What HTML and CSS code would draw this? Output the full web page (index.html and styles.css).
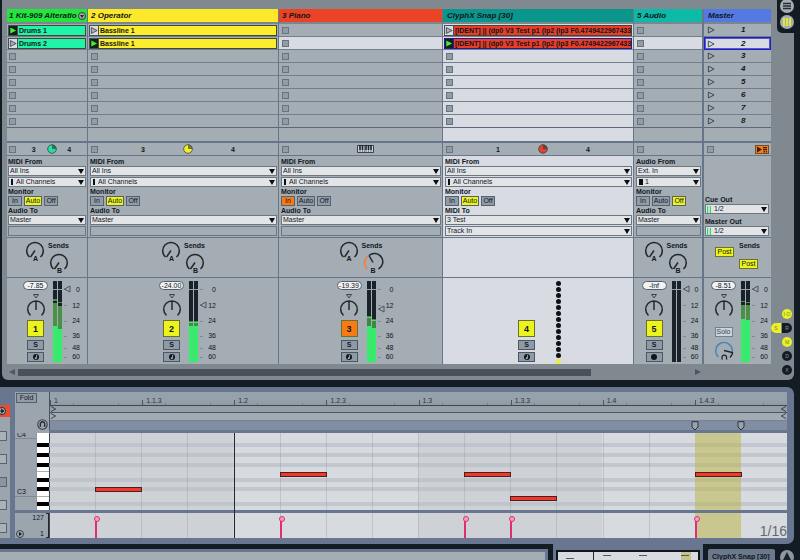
FILE: index.html
```
<!DOCTYPE html>
<html lang="en">
<head>
<meta charset="utf-8">
<title>Session</title>
<link rel="stylesheet" href="styles.css">
</head>
<body>
<svg class="defs" aria-hidden="true">
  <symbol id="play" viewBox="0 0 9 9"><path d="M1.5 1.2 8 4.5 1.5 7.8Z"/></symbol>
  <symbol id="arm" viewBox="0 0 8 8"><circle cx="4" cy="4" r="3" fill="#11161b"/><path d="M4.6 1.8v3.4" stroke="#aab2ba" stroke-width=".9"/><circle cx="3.7" cy="5.2" r="1" fill="#aab2ba"/></symbol>
  <symbol id="pan" viewBox="0 0 24 25"><path d="M9.5 1.500h5L12 5Z" fill="none" stroke="#3b444d"/><path d="M6.500 22.500A8.300 8.300 0 1 1 17.500 22.500M12 8v9" fill="none" stroke="#222a31" stroke-width="1.500"/></symbol>
  <symbol id="sends" viewBox="0 0 57 38">
    <g fill="none" stroke="#20272e" stroke-width="1.500"><path d="M6.500 19A8.300 8.300 0 1 1 17.500 19M12 12.500 7.500 19"/><path d="M30.500 31A8.300 8.300 0 1 1 41.500 31M36 24.500 31.500 31"/></g>
  </symbol>
  <symbol id="pie" viewBox="0 0 10 10"><circle cx="5" cy="5" r="4.300" stroke="#39424a" stroke-width=".8"/><path d="M5 5V.7A4.300 4.300 0 0 1 9.300 5Z" fill="#2c4038" opacity=".65"/></symbol>
</svg>

<main class="session">
  <div class="tracks">

    <section class="track kit">
      <h2>1 Kit-909 Alteratio <svg class="fold" viewBox="0 0 8 8"><circle cx="4" cy="4" r="3.500" fill="#a8a3b4" stroke="#32402f"/><path d="M2 3h4L4 6Z" fill="#20272e"/></svg></h2>
      <ul class="slots">
        <li class="clip"><button class="launch on" aria-label="Launch"><svg><use href="#play"/></svg></button><span>Drums 1</span></li>
        <li class="clip"><button class="launch" aria-label="Launch"><svg><use href="#play"/></svg></button><span>Drums 2</span></li>
        <li><button class="stop" aria-label="Stop"></button></li><li><button class="stop" aria-label="Stop"></button></li><li><button class="stop" aria-label="Stop"></button></li><li><button class="stop" aria-label="Stop"></button></li><li><button class="stop" aria-label="Stop"></button></li><li><button class="stop" aria-label="Stop"></button></li>
        <li></li>
      </ul>
      <div class="status"><button class="stop" aria-label="Stop"></button><span class="c1">3</span><svg class="c2 pie"><use href="#pie"/></svg><span class="c3">4</span></div>
      <div class="io">
        <label for="k1">MIDI From</label><div class="drop"><select id="k1"><option>All Ins</option></select></div>
        <div class="drop chan"><select aria-label="Channel"><option>All Channels</option></select></div>
        <div class="cap">Monitor</div><div class="monitor"><button>In</button><button class="lit">Auto</button><button>Off</button></div>
        <label for="k2">Audio To</label><div class="drop"><select id="k2"><option>Master</option></select></div>
        <div class="blank"></div>
      </div>
      <div class="sends"><div class="unit"><svg class="knobs"><use href="#sends"/></svg><b class="a">A</b><b class="b">B</b><b class="s">Sends</b></div></div>
      <div class="mixer"><div class="unit">
        <div class="strip"><output>-7.85</output><svg class="pan"><use href="#pan"/></svg><button class="num">1</button><button class="sm">S</button><button class="sm" aria-label="Arm"><svg><use href="#arm"/></svg></button></div>
        <svg class="meter" viewBox="0 0 9 81"><path d="M0 0h4v81H0zM5 0h4v81H5z" fill="#1a2229"/><path d="M0 18h4v2H0zM0 22h4v23H0zM5 21h4v1H5zM5 25h4v23H5z" fill="#4b9049"/><path d="M0 45h4v36H0zM5 48h4v33H5z" fill="#32ee68"/><path d="M4 45h1v36H4z" fill="#5ad37c"/><path d="M0 8h9v1H0z" fill="#9aa3aa"/></svg>
        <div class="scale"><span>0</span><span>12</span><span>24</span><span>36</span><span>48</span><span>60</span><input type="range" class="fader" aria-label="Volume" value="94"></div>
      </div></div>
    </section>

    <section class="track operator">
      <h2>2 Operator</h2>
      <ul class="slots">
        <li class="clip"><button class="launch" aria-label="Launch"><svg><use href="#play"/></svg></button><span>Bassline 1</span></li>
        <li class="clip"><button class="launch on" aria-label="Launch"><svg><use href="#play"/></svg></button><span>Bassline 1</span></li>
        <li><button class="stop" aria-label="Stop"></button></li><li><button class="stop" aria-label="Stop"></button></li><li><button class="stop" aria-label="Stop"></button></li><li><button class="stop" aria-label="Stop"></button></li><li><button class="stop" aria-label="Stop"></button></li><li><button class="stop" aria-label="Stop"></button></li>
        <li></li>
      </ul>
      <div class="status"><button class="stop" aria-label="Stop"></button><span class="c1">3</span><svg class="c2 pie"><use href="#pie"/></svg><span class="c3">4</span></div>
      <div class="io">
        <label for="o1">MIDI From</label><div class="drop"><select id="o1"><option>All Ins</option></select></div>
        <div class="drop chan"><select aria-label="Channel"><option>All Channels</option></select></div>
        <div class="cap">Monitor</div><div class="monitor"><button>In</button><button class="lit">Auto</button><button>Off</button></div>
        <label for="o2">Audio To</label><div class="drop"><select id="o2"><option>Master</option></select></div>
        <div class="blank"></div>
      </div>
      <div class="sends"><div class="unit"><svg class="knobs"><use href="#sends"/></svg><b class="a">A</b><b class="b">B</b><b class="s">Sends</b></div></div>
      <div class="mixer"><div class="unit">
        <div class="strip"><output>-24.00</output><svg class="pan"><use href="#pan"/></svg><button class="num">2</button><button class="sm">S</button><button class="sm" aria-label="Arm"><svg><use href="#arm"/></svg></button></div>
        <svg class="meter" viewBox="0 0 9 81"><path d="M0 0h4v81H0zM5 0h4v81H5z" fill="#1a2229"/><path d="M0 40h4v5H0zM5 40h4v5H5z" fill="#3f8f45"/><path d="M0 41h9v1H0z" fill="#65cf7c"/><path d="M0 45h4v36H0zM5 45h4v36H5z" fill="#32ee68"/><path d="M4 45h1v36H4z" fill="#5ad37c"/><path d="M0 8h9v1H0z" fill="#9aa3aa"/></svg>
        <div class="scale"><span>0</span><span>12</span><span>24</span><span>36</span><span>48</span><span>60</span><input type="range" class="fader" aria-label="Volume" value="73"></div>
      </div></div>
    </section>

    <section class="track piano">
      <h2>3 Piano</h2>
      <ul class="slots">
        <li><button class="stop" aria-label="Stop"></button></li><li class="light"><button class="stop" aria-label="Stop"></button></li>
        <li><button class="stop" aria-label="Stop"></button></li><li><button class="stop" aria-label="Stop"></button></li><li><button class="stop" aria-label="Stop"></button></li><li><button class="stop" aria-label="Stop"></button></li><li><button class="stop" aria-label="Stop"></button></li><li><button class="stop" aria-label="Stop"></button></li>
        <li></li>
      </ul>
      <div class="status"><button class="stop" aria-label="Stop"></button><svg class="c2 keys-icon" viewBox="0 0 17 8"><path d="M.5.5h16v7H.5Z" fill="#cdd2d6" stroke="#39424a"/><path d="M3 0v5M5.500 0v5M9 0v5M11.500 0v5M14 0v5" stroke="#1c2329" stroke-width="1.600"/><path d="M3 5v3M5.500 5v3M7.500 1v7M9 5v3M11.500 5v3M14 5v3" stroke="#4a535c" stroke-width=".6"/></svg></div>
      <div class="io">
        <label for="p1">MIDI From</label><div class="drop"><select id="p1"><option>All Ins</option></select></div>
        <div class="drop chan"><select aria-label="Channel"><option>All Channels</option></select></div>
        <div class="cap">Monitor</div><div class="monitor"><button class="hot">In</button><button>Auto</button><button>Off</button></div>
        <label for="p2">Audio To</label><div class="drop"><select id="p2"><option>Master</option></select></div>
        <div class="blank"></div>
      </div>
      <div class="sends"><div class="unit"><svg class="knobs" viewBox="0 0 57 38"><g fill="none" stroke="#20272e" stroke-width="1.500"><path d="M6.500 19A8.300 8.300 0 1 1 17.500 19M12 12.500 7.500 19"/><path d="M32 17.500A8.300 8.300 0 1 1 41.500 31M36 24.500 32 17.500"/><path d="M30.500 31A8.300 8.300 0 0 1 31 18" stroke="#ee8035"/></g></svg><b class="a">A</b><b class="b">B</b><b class="s">Sends</b></div></div>
      <div class="mixer"><div class="unit">
        <div class="strip"><output>-19.39</output><svg class="pan"><use href="#pan"/></svg><button class="num hot">3</button><button class="sm">S</button><button class="sm" aria-label="Arm"><svg><use href="#arm"/></svg></button></div>
        <svg class="meter" viewBox="0 0 9 81"><path d="M0 0h4v81H0zM5 0h4v81H5z" fill="#1a2229"/><path d="M0 35h4v10H0zM5 38h4v10H5z" fill="#3f8745"/><path d="M0 36h4v1H0zM5 39h4v1H5z" fill="#65cf7c"/><path d="M0 45h4v36H0zM5 47h4v34H5z" fill="#32ee68"/><path d="M4 45h1v36H4z" fill="#5ad37c"/><path d="M0 8h9v1H0z" fill="#9aa3aa"/></svg>
        <div class="scale"><span>0</span><span>12</span><span>24</span><span>36</span><span>48</span><span>60</span><input type="range" class="fader" aria-label="Volume" value="67"></div>
      </div></div>
    </section>

    <section class="track snap">
      <h2>ClyphX Snap [30]</h2>
      <ul class="slots">
        <li class="clip"><button class="launch" aria-label="Launch"><svg><use href="#play"/></svg></button><span>[IDENT] || (dp0 V3 Test p1 (lp2 (lp3 F0.4749422967433</span></li>
        <li class="clip picked"><button class="launch on" aria-label="Launch"><svg><use href="#play"/></svg></button><span>[IDENT] || (dp0 V3 Test p1 (lp2 (lp3 F0.4749422967433</span></li>
        <li><button class="stop" aria-label="Stop"></button></li><li><button class="stop" aria-label="Stop"></button></li><li><button class="stop" aria-label="Stop"></button></li><li><button class="stop" aria-label="Stop"></button></li><li><button class="stop" aria-label="Stop"></button></li><li><button class="stop" aria-label="Stop"></button></li>
        <li></li>
      </ul>
      <div class="status"><button class="stop" aria-label="Stop"></button><span class="c1">1</span><svg class="c2 pie"><use href="#pie"/></svg><span class="c3">4</span></div>
      <div class="io">
        <label for="s1">MIDI From</label><div class="drop"><select id="s1"><option>All Ins</option></select></div>
        <div class="drop chan"><select aria-label="Channel"><option>All Channels</option></select></div>
        <div class="cap">Monitor</div><div class="monitor"><button>In</button><button class="lit">Auto</button><button>Off</button></div>
        <label for="s2">MIDI To</label><div class="drop"><select id="s2"><option>3 Test</option></select></div>
        <div class="drop"><select aria-label="Destination"><option>Track In</option></select></div>
      </div>
      <div class="sends"></div>
      <div class="mixer"><div class="unit">
        <div class="strip low"><button class="num">4</button><button class="sm">S</button><button class="sm" aria-label="Arm"><svg><use href="#arm"/></svg></button></div>
        <div class="dots"><i></i><i></i><i></i><i></i><i></i><i></i><i></i><i></i><i></i><i></i><i></i><i></i><i></i><i></i></div>
      </div></div>
    </section>

    <section class="track audio">
      <h2>5 Audio</h2>
      <ul class="slots">
        <li><button class="stop" aria-label="Stop"></button></li><li class="light"><button class="stop" aria-label="Stop"></button></li>
        <li><button class="stop" aria-label="Stop"></button></li><li><button class="stop" aria-label="Stop"></button></li><li><button class="stop" aria-label="Stop"></button></li><li><button class="stop" aria-label="Stop"></button></li><li><button class="stop" aria-label="Stop"></button></li><li><button class="stop" aria-label="Stop"></button></li>
        <li></li>
      </ul>
      <div class="status"><button class="stop" aria-label="Stop"></button></div>
      <div class="io">
        <label for="a1">Audio From</label><div class="drop"><select id="a1"><option>Ext. In</option></select></div>
        <div class="drop chan wide"><select aria-label="Channel"><option>1</option></select></div>
        <div class="cap">Monitor</div><div class="monitor"><button>In</button><button>Auto</button><button class="lit">Off</button></div>
        <label for="a2">Audio To</label><div class="drop"><select id="a2"><option>Master</option></select></div>
        <div class="blank"></div>
      </div>
      <div class="sends"><div class="unit"><svg class="knobs"><use href="#sends"/></svg><b class="a">A</b><b class="b">B</b><b class="s">Sends</b></div></div>
      <div class="mixer"><div class="unit">
        <div class="strip"><output>-Inf</output><svg class="pan"><use href="#pan"/></svg><button class="num">5</button><button class="sm">S</button><button class="sm" aria-label="Arm"><svg viewBox="0 0 8 8"><circle cx="4" cy="4" r="3" fill="#11161b"/></svg></button></div>
        <svg class="meter" viewBox="0 0 9 81"><path d="M0 0h4v81H0zM5 0h4v81H5z" fill="#1a2229"/><path d="M0 8h9v1H0z" fill="#9aa3aa"/></svg>
        <div class="scale"><span>0</span><span>12</span><span>24</span><span>36</span><span>48</span><span>60</span><input type="range" class="fader" aria-label="Volume" value="94"></div>
      </div></div>
    </section>

    <section class="track master">
      <h2>Master</h2>
      <ul class="slots">
        <li><button class="scene"><svg><use href="#play"/></svg>1</button></li>
        <li class="light"><button class="scene"><svg><use href="#play"/></svg>2</button></li>
        <li><button class="scene"><svg><use href="#play"/></svg>3</button></li>
        <li><button class="scene"><svg><use href="#play"/></svg>4</button></li>
        <li><button class="scene"><svg><use href="#play"/></svg>5</button></li>
        <li><button class="scene"><svg><use href="#play"/></svg>6</button></li>
        <li><button class="scene"><svg><use href="#play"/></svg>7</button></li>
        <li><button class="scene"><svg><use href="#play"/></svg>8</button></li>
        <li></li>
      </ul>
      <div class="status"><button class="stop" aria-label="Stop all clips"></button><button class="back" aria-label="Back to arrangement"><svg viewBox="0 0 12 7"><path d="M1 .5 6 3.500 1 6.500ZM7 1h4v1.200H7zM7 3h4v1.200H7zM7.500 5H9v1.500H7.500zM10 5h1v1.500h-1z" fill="#3a1c08"/></svg></button></div>
      <div class="io">
        <label for="m1">Cue Out</label><div class="drop out"><select id="m1"><option>1/2</option></select></div>
        <label for="m2">Master Out</label><div class="drop out"><select id="m2"><option>1/2</option></select></div>
      </div>
      <div class="sends post"><div><button>Post</button></div><div><b>Sends</b><button>Post</button></div></div>
      <div class="mixer"><div class="unit">
        <div class="strip"><output>-8.51</output><svg class="pan"><use href="#pan"/></svg><button class="solo">Solo</button><svg class="cue" viewBox="0 0 24 24"><path d="M6.500 18A8.300 8.300 0 1 1 20.200 13" fill="none" stroke="#3f86bd" stroke-width="1.400"/><path d="M12 11.500 20.500 13.500Q20.500 16 18 18.500" fill="none" stroke="#20272e" stroke-width="1.500"/><path d="M10 20.500v-2a2.300 2.300 0 0 1 4.600 0v2M9.300 20h1.500M13.800 20h1.500" fill="none" stroke="#20272e" stroke-width="1.200"/></svg></div>
        <svg class="meter" viewBox="0 0 9 81"><path d="M0 0h4v81H0zM5 0h4v81H5z" fill="#1a2229"/><path d="M0 20h4v1H0zM5 21h4v1H5zM0 24h4v15H0zM5 24h4v16H5z" fill="#4b9049"/><path d="M0 38h4v43H0zM5 39h4v42H5z" fill="#32ee68"/><path d="M4 39h1v42H4z" fill="#5ad37c"/><path d="M0 8h9v1H0z" fill="#9aa3aa"/></svg>
        <div class="scale"><span>0</span><span>12</span><span>24</span><span>36</span><span>48</span><span>60</span><input type="range" class="fader" aria-label="Volume" value="94"></div>
      </div></div>
    </section>
  </div>

  <div class="scroller"><svg viewBox="0 0 6 6"><path d="M6 0v6L0 3Z"/></svg><div class="rail"><div class="thumb"></div></div><svg viewBox="0 0 6 6"><path d="M0 0v6l6-3Z"/></svg></div>

  <nav class="views">
    <button aria-label="Arrangement view"><svg viewBox="0 0 14 14"><circle cx="7" cy="7" r="7" fill="#a4acb4"/><path d="M3 4.500h8M3 7h8M3 9.500h8" stroke="#232b33" stroke-width="1.300"/></svg></button>
    <button aria-label="Session view"><svg viewBox="0 0 14 14"><circle cx="7" cy="7" r="7" fill="#a4acb4"/><path d="M4 3v8M7 3v8M10 3v8" stroke="#e9f02a" stroke-width="1.800"/></svg></button>
  </nav>
  <nav class="toggles">
    <button class="yes">I·O</button>
    <div><button class="yes left">S</button><button class="right">R</button></div>
    <button class="yes">M</button>
    <button>D</button>
    <button>X</button>
  </nav>
</main>

<section class="detail">
  <aside class="clipbox">
    <div class="bar"><svg viewBox="0 0 8 8"><circle cx="4" cy="4" r="3.500" fill="#aab2ba" stroke="#20272e"/><path d="M1 4h4M3.500 2.200 6 4 3.500 5.800Z" fill="#20272e" stroke="#20272e"/></svg></div>
    <i></i><i></i><i class="full"></i><i></i><i></i>
  </aside>
  <div class="editor">
    <div class="corner"><button class="foldbtn">Fold</button><svg class="phones" viewBox="0 0 10 10"><circle cx="5" cy="5" r="4.300" fill="none" stroke="#39424a"/><path d="M3 7V4.500a2 2 0 0 1 4 0V7M2.600 6.500h1.200M6.200 6.500h1.200" fill="none" stroke="#20272e" stroke-width="1.200"/></svg></div>
    <div class="timeline">
      <ol class="ruler"><li>1</li><li>1.1.3</li><li>1.2</li><li>1.2.3</li><li>1.3</li><li>1.3.3</li><li>1.4</li><li>1.4.3</li></ol>
      <div class="loop"><svg viewBox="0 0 7 7"><path d="M.5.5 6 3.500.5 6.500"/></svg><svg viewBox="0 0 7 7"><path d="M6.500.5 1 3.500 6.500 6.500"/></svg></div>
      <div class="loop"><svg viewBox="0 0 7 7"><path d="M.5.5 6 3.500.5 6.500"/></svg><svg viewBox="0 0 7 7"><path d="M6.500.5 1 3.500 6.500 6.500"/></svg></div>
      <div class="markers"><svg style="left:87.5%" viewBox="0 0 8 10"><path d="M1 .7h6v5.300L4 9 1 6Z"/></svg><svg style="left:93.75%" viewBox="0 0 8 10"><path d="M1 .7h6v5.300L4 9 1 6Z"/></svg></div>
    </div>
    <div class="keys"><div class="names"><span>C4</span><span>C3</span></div><div class="keyboard"></div></div>
    <div class="notes">
      <div class="region"></div><div class="playline"></div>
      <i class="g" style="left:6.25%"></i><i class="g" style="left:12.5%"></i><i class="g" style="left:18.75%"></i><i class="g" style="left:31.25%"></i><i class="g" style="left:37.5%"></i><i class="g" style="left:43.75%"></i><i class="g" style="left:50%"></i><i class="g" style="left:56.25%"></i><i class="g" style="left:62.5%"></i><i class="g" style="left:68.75%"></i><i class="g" style="left:75%"></i><i class="g" style="left:81.25%"></i>
      <div class="note" style="left:6.25%;top:54px"></div>
      <div class="note" style="left:31.25%;top:39px"></div>
      <div class="note" style="left:56.25%;top:39px"></div>
      <div class="note" style="left:62.5%;top:63px"></div>
      <div class="note" style="left:87.5%;top:39px"></div>
    </div>
    <div class="vlabels"><svg viewBox="0 0 8 8"><circle cx="4" cy="4" r="3.500" fill="none" stroke="#39424a"/><path d="M3 2v4l3-2Z" fill="#11161b"/></svg><div class="range"><span>127</span><span>1</span></div><div class="bracket"></div></div>
    <div class="velocity">
      <div class="region"></div><div class="playline"></div>
      <i class="g" style="left:6.25%"></i><i class="g" style="left:12.5%"></i><i class="g" style="left:18.75%"></i><i class="g" style="left:31.25%"></i><i class="g" style="left:37.5%"></i><i class="g" style="left:43.75%"></i><i class="g" style="left:50%"></i><i class="g" style="left:56.25%"></i><i class="g" style="left:62.5%"></i><i class="g" style="left:68.75%"></i><i class="g" style="left:75%"></i><i class="g" style="left:81.25%"></i>
      <div class="pin" style="left:6.25%"></div><div class="pin" style="left:31.25%"></div><div class="pin" style="left:56.25%"></div><div class="pin" style="left:62.5%"></div><div class="pin" style="left:87.5%"></div>
      <div class="gridsize">1/16</div>
    </div>
  </div>
</section>

<footer class="foot">
  <div class="info"></div>
  <div class="overview"><div class="mini"><i style="left:6%;top:6px"></i><b style="left:25%"></b><i style="left:32%;top:3px"></i><i style="left:58%;top:3px"></i><em></em><i style="left:88%;top:3px"></i></div></div>
  <div class="device">ClyphX Snap [30]</div>
  <button class="up" aria-label="Show devices"><svg viewBox="0 0 14 14"><circle cx="7" cy="7" r="7" fill="#8d97a1"/><path d="M7 2 11 10H3Z" fill="#1a2229"/></svg></button>
</footer>
</body>
</html>
```
FILE: styles.css
```
:root {
  --panel: #808990;
  --cell: #a4adb4;
  --light: #d8dbe1;
  --line: #66758a;
  --blue: #69768f;
  --ink: #11171d;
  --dark: #131b23;
}
* { box-sizing: border-box; }
body {
  margin: 0;
  height: 100vh;
  overflow: hidden;
  background: var(--dark);
  color: var(--ink);
  font: 7px/9px "Liberation Sans", Arial, sans-serif;
}
button, select, input, output { font: inherit; color: inherit; margin: 0; padding: 0; border-radius: 0; }
button { display: block; line-height: 8px; text-align: center; }
svg { display: block; }
ul, ol { list-style: none; margin: 0; padding: 0; }
.defs { position: absolute; width: 0; height: 0; }

/* session */
.session {
  position: relative;
  margin: 0 6px 0 2px;
  padding: 9px 23px 0 5px;
  background: var(--panel);
  border-radius: 0 0 6px 6px;
}
.tracks {
  display: grid;
  grid-template-columns: 80fr 190fr 163fr 190fr 68fr 68fr;
  gap: 1px;
  background: var(--line);
}
.track { min-width: 0; background: var(--line); }
.master { border-left: 1px solid var(--line); }
.track h2 {
  display: flex;
  justify-content: space-between;
  align-items: center;
  height: 13px;
  margin: 0;
  padding: 0 2px 0 3px;
  overflow: hidden;
  white-space: nowrap;
  font: italic bold 8px/13px "Liberation Sans", Arial, sans-serif;
  background: var(--tint);
}
.fold { width: 8px; height: 8px; flex: none; }
.kit { --tint: #22e63c; --clip: #20f4a6; --pie: #24dfa0; }
.operator { --tint: #fbe92a; --clip: #fced2e; --pie: #f5ec27; }
.piano { --tint: #ea4326; --clip: #ea4326; }
.snap { --tint: #0b968c; --clip: #e93d27; --pie: #e5402c; }
.audio { --tint: #0dbaa8; }
.master { --tint: #5579e2; }
.snap h2, .master h2 { padding-left: 4px; }
.track.kit h2 { padding: 0 1px 0 2px; }

.slots { border-top: 2px solid #7b868f; }
.slots li {
  display: flex;
  align-items: center;
  height: 13px;
  padding-left: 3px;
  background: var(--cell);
  border-bottom: 1px solid #73808c;
}
.slots li:nth-child(8) { border-bottom-color: #59687c; }
.slots li:last-child { border-bottom: 0; }
.slots .light, .snap .slots li { background: var(--light); }
.stop { width: 7px; height: 7px; background: #939ca4; border: 1px solid #67737f; }
.slots .clip { padding: 0 1px; }
.kit .slots li:not(.clip) { padding-left: 2px; }
.clip span {
  flex: 1;
  min-width: 0;
  height: 11px;
  overflow: hidden;
  white-space: nowrap;
  font-weight: bold;
  line-height: 10px;
  padding-left: 1px;
  background: var(--clip);
  border: 1px solid #3e4a35;
  border-left: 0;
}
.launch { width: 10px; height: 11px; border: 1px solid #444f5a; background: #dadde2; }
.launch svg { width: 8px; height: 9px; fill: #a9b0b8; stroke: #3c4650; }
.launch.on { background: #14201a; }
.launch.on svg { fill: #45f032; stroke: none; }
.picked span, .picked .launch { border-color: #211a9c; }
.scene { display: flex; align-items: center; gap: 26px; width: 100%; height: 12px; border: 0; background: none; font: italic bold 8px/12px "Liberation Sans", Arial, sans-serif; }
.scene svg { width: 8px; height: 8px; fill: none; stroke: #333d47; }
.master .slots .light { padding-left: 2px; border: 1px solid #1f20c4; outline: 1px solid #5557c8; outline-offset: -2px; }

.status {
  display: grid;
  grid-template-columns: 7px 1fr 2fr 2fr 2fr 1fr;
  align-items: center;
  justify-items: center;
  height: 15px;
  padding-left: 3px;
  background: var(--cell);
  border-top: 2px solid var(--line);
  border-bottom: 1px solid var(--line);
}
.kit .status { padding-left: 2px; }
.c1 { grid-column: 3; font-weight: bold; }
.c2 { grid-column: 4; }
.c3 { grid-column: 5; font-weight: bold; }
.pie { width: 10px; height: 10px; fill: var(--pie); }
.keys-icon { width: 17px; height: 8px; }
.master .status { display: flex; justify-content: space-between; padding-right: 2px; }
.back { width: 14px; height: 9px; background: #f0801f; border: 1px solid #7a4a22; }
.back svg { width: 12px; height: 7px; }

.io { height: 82px; padding: 1px 1px 0 2px; background: var(--cell); border-bottom: 1px solid var(--line); }
.kit .io { padding-left: 1px; }
.master .io { padding: 1px 2px 0 1px; }
.snap .io, .snap .sends, .snap .mixer { background: var(--light); }
.io label, .cap { display: block; height: 9px; font-weight: bold; }
.drop { position: relative; height: 10px; margin-bottom: 1px; background: #e2e4e6; border: 1px solid #6b7782; }
.drop + label, .drop + .cap { margin-top: -1px; }
.drop select { display: block; width: 100%; height: 8px; line-height: 8px; padding: 0 8px 0 1px; border: 0; background: none; appearance: none; }
.drop::after { content: ""; position: absolute; right: 1px; top: 2px; border: 3px solid transparent; border-top: 5px solid #0b0f13; border-bottom: 0; pointer-events: none; }
.chan select { padding-left: 7px; }
.chan.wide select { padding-left: 8px; }
.chan::before { content: ""; position: absolute; left: 2px; top: 1px; width: 2px; height: 6px; background: #0b0f13; }
.chan.wide::before { width: 4px; }
.blank { height: 10px; border: 1px solid #6b7782; }
.monitor { display: flex; gap: 2px; height: 10px; }
.monitor button { width: 14px; height: 10px; border: 1px solid #55616d; background: #929ca9; }
.monitor button:nth-child(2) { width: 18px; }
.monitor .lit, .post button, .num { background: #edf41d; }
.monitor .hot, .num.hot { background: #f87a13; }
.master .io { display: flex; flex-direction: column; justify-content: flex-end; }
.master .drop + label { margin-top: 2px; }
.out select { padding-left: 8px; }
.out::before { content: ""; position: absolute; left: 1px; top: 1px; width: 4px; height: 7px; background: repeating-linear-gradient(90deg, #35d760 0 1px, #b9e8c6 1px 3px); }

.sends, .mixer { display: flex; justify-content: center; padding-left: 9px; background: var(--cell); }
.audio .sends, .audio .mixer, .master .mixer { padding-left: 4px; }
.sends { height: 40px; border-bottom: 1px solid var(--line); }
.unit { position: relative; display: flex; width: 57px; flex: none; }
.knobs { width: 57px; height: 38px; }
.unit b { position: absolute; }
.unit .a { left: 10px; top: 16px; }
.unit .b { left: 34px; top: 28px; }
.unit .s { left: 25px; top: 3px; }
.master .post { justify-content: flex-start; gap: 5px; padding: 3px 0 0 11px; }
.post div:first-child { padding-top: 6px; }
.post b { display: block; height: 9px; margin-bottom: 9px; }
.post button { width: 19px; height: 10px; border: 1px solid #6b7330; }

.mixer { height: 86px; padding-top: 3px; }
.strip { display: flex; flex-direction: column; align-items: center; width: 25px; margin-right: 5px; }
.strip output { width: 25px; height: 9px; line-height: 8px; text-align: center; background: #f0f2f3; border: 1px solid #555f68; border-radius: 5px; }
.pan { width: 24px; height: 25px; margin: 3px 0 2px; }
.num { width: 17px; height: 17px; border: 1px solid #67702e; font-weight: bold; font-size: 9px; }
.sm { display: flex; align-items: center; justify-content: center; width: 17px; height: 10px; margin-top: 2px; border: 1px solid #4c5762; background: #8f9aa9; font-weight: bold; }
.num + .sm { margin-top: 3px; }
.sm svg { width: 8px; height: 8px; }
.solo { width: 18px; height: 10px; margin-top: 7px; border: 1px solid #6c8295; background: #cdd5dc; color: #35434f; }
.cue { width: 24px; height: 24px; margin-top: 2px; }
.low { padding-top: 39px; }
.meter { width: 9px; height: 81px; }
.scale { position: relative; display: grid; grid-template-rows: 16px 16px 15px 15px 9px 9px; width: 18px; text-align: right; }
.scale span { position: relative; display: flex; align-items: center; justify-content: flex-end; }
.scale span::before { content: ""; position: absolute; left: 2px; top: 50%; width: 3px; height: 1px; background: #7d8891; }
.fader { position: absolute; left: 1px; top: 0; width: 8px; height: 81px; appearance: none; writing-mode: vertical-lr; direction: rtl; background: none; }
.fader::-webkit-slider-thumb { appearance: none; width: 8px; height: 8px; background: url("data:image/svg+xml,%3Csvg xmlns='http://www.w3.org/2000/svg' viewBox='0 0 8 8'%3E%3Cpath d='M7 1v6L1.500 4Z' fill='%23a4adb4' stroke='%234a545e'/%3E%3C/svg%3E"); }
.dots { display: flex; flex-direction: column; gap: 1px; padding: 0 0 0 12px; }
.dots i { width: 5px; height: 5px; border-radius: 50%; background: #0d1217; }
.dots i:last-child { background: #e8ec3c; }

.scroller { display: flex; align-items: center; gap: 3px; height: 16px; margin: 0 70px 0 2px; }
.scroller svg { width: 6px; height: 6px; fill: #4d5760; }
.rail { flex: 1; }
.thumb { width: 85%; height: 7px; background: #485159; }

.views { position: absolute; top: 0; right: 0; width: 17px; height: 33px; background: var(--dark); border-radius: 0 0 0 5px; }
.views button { position: absolute; left: 3px; top: -1px; border: 0; background: none; }
.views button + button { top: 15px; }
.views svg { width: 14px; height: 14px; }
.toggles { position: absolute; right: 2px; top: 309px; display: flex; flex-direction: column; align-items: flex-end; gap: 4px; }
.toggles button { width: 10px; height: 10px; border: 0; border-radius: 5px; background: var(--dark); color: #8d97a0; font-size: 5px; line-height: 10px; }
.toggles .yes { background: #eaf02a; color: #77802a; }
.toggles div { display: flex; }
.toggles .left { border-radius: 5px 0 0 5px; }
.toggles .right { border-radius: 0 5px 5px 0; margin-left: 1px; }

/* clip detail */
.detail { display: flex; gap: 5px; margin: 7px 6px 0 0; padding: 5px 6px 6px 0; background: var(--blue); border-radius: 0 7px 7px 0; }
.clipbox { width: 10px; flex: none; margin-top: 13px; overflow: hidden; background: #9ba5ae; }
.clipbox .bar { height: 12px; padding-top: 2px; margin-bottom: 14px; background: #ea4c30; }
.clipbox svg { width: 8px; height: 8px; margin-left: -2px; }
.clipbox i { display: block; width: 7px; height: 10px; margin-bottom: 13px; border: 1px solid #58636e; border-left: 0; background: #a9b1b9; }
.clipbox i:last-child { margin-bottom: 0; }
.clipbox .full { background: #8b959f; }
.editor { flex: 1; min-width: 0; display: grid; grid-template-columns: 34px 1fr; grid-template-rows: 38px 77px 25px; row-gap: 3px; }
.corner { display: flex; flex-direction: column; justify-content: space-between; align-items: flex-end; height: 41px; padding: 1px 1px 3px; background: #9ca5ae; }
.foldbtn { align-self: flex-start; width: 21px; height: 10px; border: 1px solid #535f6b; background: #929ca7; }
.phones { width: 11px; height: 11px; }
.timeline { min-width: 0; margin-right: 1px; border-left: 1px solid #46525e; }
.ruler { display: grid; grid-template-columns: repeat(8, 1fr); height: 14px; background: linear-gradient(#96a1a9 60%, #8f9aa4); border-bottom: 1px solid #3d4853; }
.ruler li { position: relative; padding: 4px 0 0 4px; color: #2c3640; }
.ruler li::before { content: ""; position: absolute; left: 0; bottom: 0; width: 1px; height: 5px; background: #4a5661; }
.ruler li::after { content: ""; position: absolute; left: 25%; right: 25%; bottom: 0; height: 2px; border: solid #75818c; border-width: 0 1px; }
.loop { display: flex; justify-content: space-between; height: 7px; background: #949fa8; border-bottom: 1px solid #4c5763; }
.loop + .loop { height: 8px; background: #a1abb1; border-color: #77839a; }
.loop svg { width: 7px; height: 6px; fill: none; stroke: #28323b; }
.markers { position: relative; height: 9px; background: #818da0; }
.markers svg { position: absolute; top: 0; width: 8px; height: 10px; margin-left: -4px; fill: #99a3b0; stroke: #28323b; }
.keys { display: flex; overflow: hidden; background: #9ca5ae; }
.names { flex: 1; }
.names span { display: block; height: 9px; padding-left: 2px; margin-top: -3px; border-bottom: 1px solid #7f8a94; }
.names span + span { margin-top: 48px; height: 10px; }
.keyboard {
  width: 13px;
  border-left: 1px solid #9099a0;
  background: linear-gradient(#fff 10px, #000 10px 14px, #fff 14px 20px, #000 20px 24px, #fff 24px 30px, #000 30px 34px, #fff 34px 38px, #a9afb4 38px 39px, #fff 39px 45px, #000 45px 49px, #fff 49px 54px, #000 54px 58px, #fff 58px 63px, #a9afb4 63px 64px, #fff 64px 69px, #000 69px 73px, #fff 73px);
}
.notes, .velocity { position: relative; margin-right: 1px; background: linear-gradient(90deg, #3d4853 1px, #ced2d6 1px 25%, #d7dbe0 25% 50%, #ced2d6 50% 75%, #d7dbe0 75%); }
.notes {
  background:
    linear-gradient(transparent 10px, #b9bdc6b0 10px 14px, transparent 14px 20px, #b9bdc6b0 20px 24px, transparent 24px 30px, #b9bdc6b0 30px 34px, transparent 34px 45px, #b9bdc6b0 45px 49px, transparent 49px 54px, #b9bdc6b0 54px 58px, transparent 58px 69px, #b9bdc6b0 69px 73px, transparent 73px),
    linear-gradient(90deg, #3d4853 1px, #ced2d6 1px 25%, #d7dbe0 25% 50%, #ced2d6 50% 75%, #d7dbe0 75%);
}
.region { position: absolute; left: 87.5%; width: 6.25%; top: 0; bottom: 0; background: #bdb64a88; }
.playline { position: absolute; left: 25%; width: 1px; top: 0; bottom: 0; background: #20272e; }
.notes .playline { bottom: -3px; }
.g { position: absolute; top: 0; bottom: 0; width: 1px; background: #8f969f55; }
.note { position: absolute; width: calc(6.25% + 1px); height: 5px; background: #f0382b; border: 1px solid #4a1f20; }
.vlabels { display: flex; align-items: flex-end; padding: 0 0 0 1px; background: #9ca5ae; }
.vlabels svg { width: 8px; height: 8px; }
.range { flex: 1; display: flex; flex-direction: column; justify-content: space-between; height: 25px; padding: 0 2px 0 0; text-align: right; }
.bracket { width: 3px; height: 25px; border: 1px solid #20272e; border-left: 0; }
.pin { position: absolute; top: 5px; bottom: 0; width: 2px; background: #e02f70; }
.pin::before { content: ""; position: absolute; left: -1px; top: -2px; width: 4px; height: 4px; border: 1px solid #e02f70; border-radius: 50%; background: #f2a2bd; }
.gridsize { position: absolute; right: 0; bottom: 0; font-size: 14px; line-height: 14px; color: #66696d; }

/* footer */
.foot { display: flex; align-items: flex-start; height: 11px; margin-top: 5px; }
.info { flex: 1; height: 20px; background: var(--cell); border: 3px solid var(--blue); border-width: 3px 3px 0 0; }
.overview { flex: 0 1 150px; height: 20px; margin: -5px 0 0 5px; padding: 6px 3px 0; background: var(--blue); }
.mini { position: relative; height: 14px; background: var(--light); border: 2px solid #10161c; }
.mini i, .mini b, .mini em { position: absolute; }
.mini i { width: 8px; height: 1px; background: #4f5963; }
.mini b { top: 0; bottom: 0; width: 1px; background: #20272e; }
.mini em { right: 5%; width: 7%; top: 0; bottom: 0; background: #c5c488; }
.device { flex: 0 1 67px; height: 20px; margin-left: 5px; padding: 3px 0 0 4px; background: #6c798c; font-weight: bold; white-space: nowrap; border-radius: 2px 2px 0 0; }
.up { margin: 1px 6px 0 5px; border: 0; background: none; }
.up svg { width: 14px; height: 14px; }
```
